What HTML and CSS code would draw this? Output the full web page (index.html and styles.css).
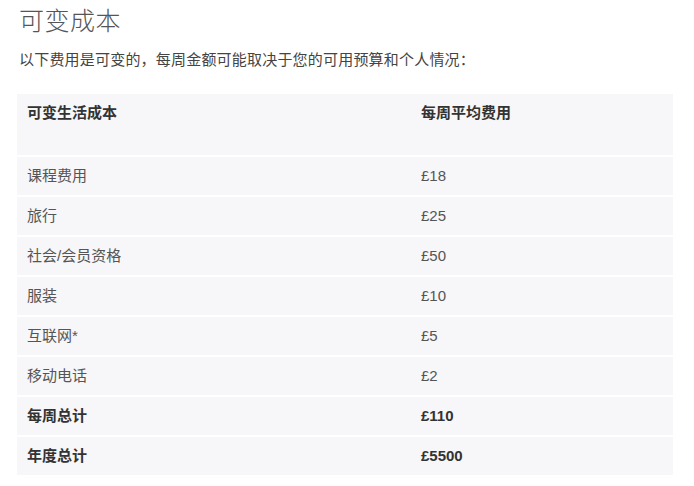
FILE: index.html
```html
<!DOCTYPE html>
<html lang="zh">
<head>
<meta charset="utf-8">
<link rel="stylesheet" href="styles.css">
</head>
<body>
<div class="page">
  <h2 class="title">可变成本</h2>
  <p class="intro">以下费用是可变的，每周金额可能取决于您的可用预算和个人情况：</p>
  <table class="costs">
    <thead>
      <tr><th class="c1">可变生活成本</th><th class="c2">每周平均费用</th></tr>
    </thead>
    <tbody>
      <tr><td>课程费用</td><td>£18</td></tr>
      <tr><td>旅行</td><td>£25</td></tr>
      <tr><td>社会/会员资格</td><td>£50</td></tr>
      <tr><td>服装</td><td>£10</td></tr>
      <tr><td>互联网*</td><td>£5</td></tr>
      <tr><td>移动电话</td><td>£2</td></tr>
      <tr class="total"><td>每周总计</td><td>£110</td></tr>
      <tr class="total"><td>年度总计</td><td>£5500</td></tr>
    </tbody>
  </table>
</div>
</body>
</html>
```
FILE: styles.css
```css
html, body {
  margin: 0;
  padding: 0;
  background: #ffffff;
}
body {
  font-family: "Liberation Sans", "Noto Sans CJK SC", sans-serif;
  color: #555;
}
.page {
  padding: 4px 21px 0 17px;
}
.title {
  margin: 0 0 0 2px;
  font-family: "Noto Sans CJK SC", sans-serif;
  font-size: 25px;
  font-weight: 300;
  line-height: 30px;
  color: #555;
  letter-spacing: 0.5px;
}
.intro {
  margin: 15px 0 0 2px;
  font-size: 15px;
  line-height: 22px;
  color: #444;
  letter-spacing: 0.2px;
}
.costs {
  margin-top: 23px;
  width: 656px;
  border-collapse: collapse;
  font-size: 15px;
}
.costs th, .costs td {
  background: #f7f6f8;
  text-align: left;
  padding: 9px 10px;
  line-height: 20px;
  border-bottom: 2px solid #fff;
}
.costs th {
  font-weight: bold;
  color: #333;
  vertical-align: top;
  height: 20px;
  padding-top: 9px;
  padding-bottom: 32px;
}
.costs .c1 {
  width: 374px;
}
.costs td {
  color: #555;
}
.costs .total td {
  font-weight: bold;
  color: #333;
}
```
